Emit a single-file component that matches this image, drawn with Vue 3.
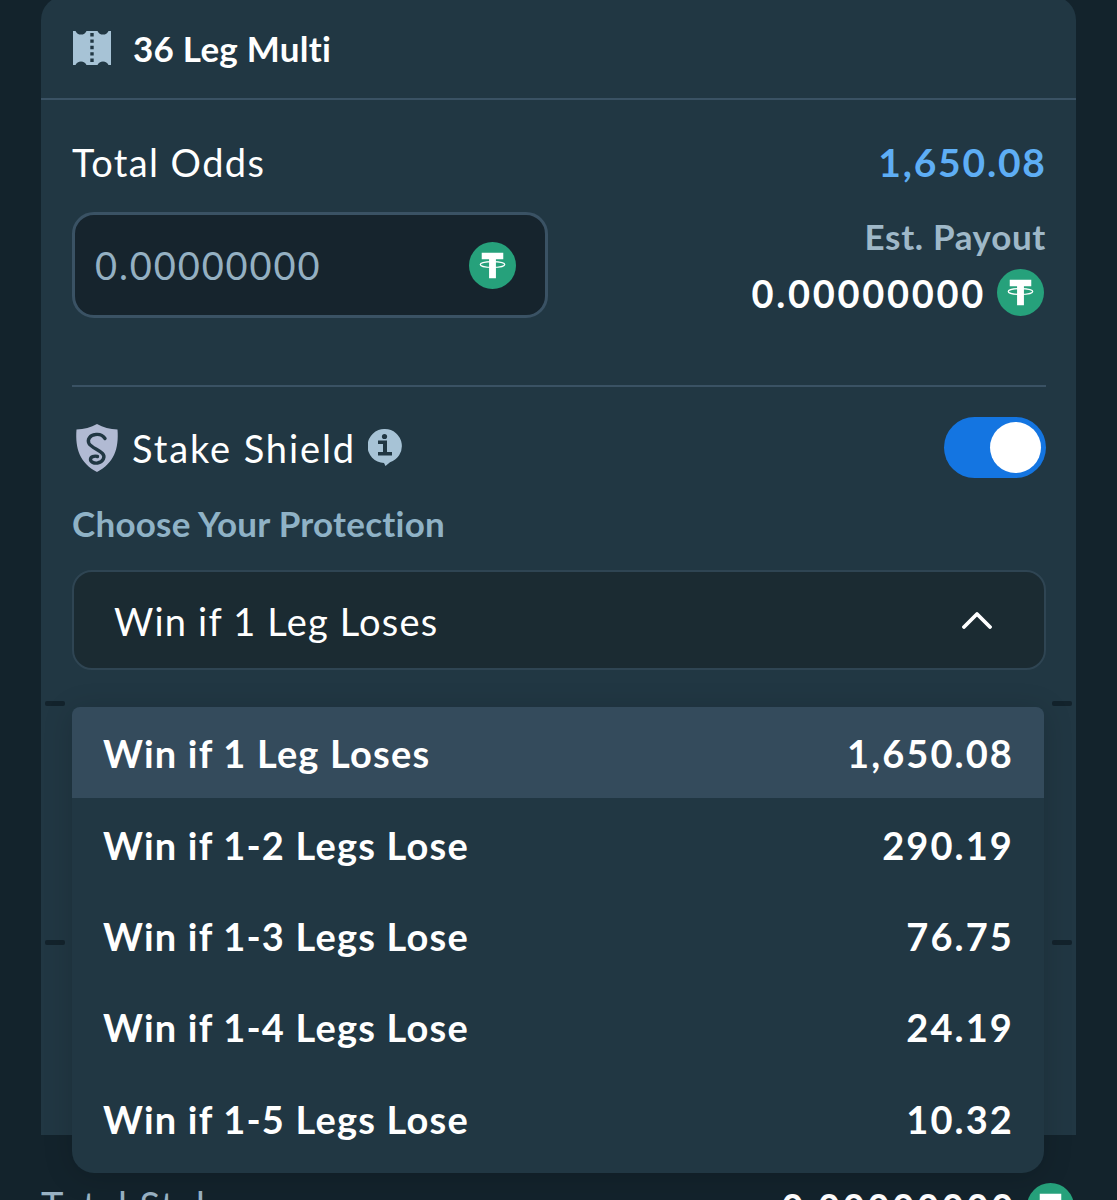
<script setup>
const options = [
  { label: 'Win if 1 Leg Loses', odds: '1,650.08', active: true },
  { label: 'Win if 1-2 Legs Lose', odds: '290.19' },
  { label: 'Win if 1-3 Legs Lose', odds: '76.75' },
  { label: 'Win if 1-4 Legs Lose', odds: '24.19' },
  { label: 'Win if 1-5 Legs Lose', odds: '10.32' },
]
</script>

<template>
  <div class="page">
    <svg width="0" height="0" class="defs">
      <symbol id="usdt" viewBox="0 0 48 48">
        <circle cx="24" cy="24" r="24" fill="#26a17b" />
        <path d="M13 11h22v6.500h-7.500V37h-7V17.500H13z" fill="#fff" />
        <ellipse cx="24" cy="23" rx="12.500" ry="3" fill="none" stroke="#fff" stroke-width="1.300" />
      </symbol>
    </svg>

    <section class="card">
      <header class="card-head">
        <svg class="ticket" viewBox="0 0 38 34">
          <path d="M0 0h2.500a6 6 0 0 0 11 0h11a6 6 0 0 0 11 0H38v34h-2.500a6 6 0 0 0-11 0h-11a6 6 0 0 0-11 0H0z" fill="#a7c3d6" />
          <path d="M19 2v30" stroke="#213743" stroke-width="3.400" stroke-dasharray="3.400 3" />
        </svg>
        <span>36 Leg Multi</span>
      </header>

      <div class="card-body">
        <div class="odds-row">
          <span class="odds-label">Total Odds</span>
          <span class="odds-value">1,650.08</span>
        </div>

        <div class="stake-row">
          <div class="stake-input">
            <span>0.00000000</span>
            <svg class="coin"><use href="#usdt" /></svg>
          </div>
          <div class="payout">
            <span class="payout-label">Est. Payout</span>
            <div class="payout-value">
              <span>0.00000000</span>
              <svg class="coin"><use href="#usdt" /></svg>
            </div>
          </div>
        </div>

        <div class="divider"></div>

        <div class="shield-row">
          <div class="shield-title">
            <svg class="shield" viewBox="0 0 44 48">
              <path d="M22 0c6 3.500 13 5 20.500 5.500C44 25 39 39 22 48 5 39 0 25 1.500 5.500 9 5 16 3.500 22 0z" fill="#b1bad3" />
              <path d="M30 14.500C28 11.500 24 10 20.500 10.500 15 11 12 15.500 14 19.500c2.200 4 9.500 6 13.500 10 3 3 1 8.500-5 9.500-3.500.5-7-1-7-3.500 0-2.500 3.500-4 7-3" fill="none" stroke="#213743" stroke-width="3.400" stroke-linecap="round" />
            </svg>
            <span class="shield-text">Stake Shield</span>
            <svg class="info" viewBox="0 0 34 37">
              <path d="M17 0a17 17 0 0 1 5 33.200L17.500 37l-1.500-3A17 17 0 0 1 17 0z" fill="#a7c3d6" />
              <circle cx="16.500" cy="7.500" r="2.600" fill="#213743" />
              <path d="M10 11.500h9V23h5v3.500H10V23h5v-8h-5z" fill="#213743" />
            </svg>
          </div>
          <div class="toggle"><div class="knob"></div></div>
        </div>

        <div class="choose">Choose Your Protection</div>

        <div class="select">
          <span>Win if 1 Leg Loses</span>
          <svg class="chevron" viewBox="0 0 30 18">
            <path d="M2 16 15 3l13 13" fill="none" stroke="#fff" stroke-width="3.800" stroke-linecap="round" stroke-linejoin="round" />
          </svg>
        </div>
      </div>

      <div class="legs">
        <div class="leg-rule"><i></i><i></i></div>
        <div class="leg-rule"><i></i><i></i></div>
      </div>
    </section>

    <footer class="foot">
      <span class="foot-label">Total Stake</span>
      <div class="foot-value">
        <span>0.00000000</span>
        <svg class="coin"><use href="#usdt" /></svg>
      </div>
    </footer>

    <ul class="menu">
      <li v-for="opt in options" :key="opt.label" :class="{ active: opt.active }">
        <span class="opt-label">{{ opt.label }}</span>
        <span class="opt-odds">{{ opt.odds }}</span>
      </li>
    </ul>
  </div>
</template>

<style>
html, body {
  background: #13232c;
}
</style>

<style scoped>
.page {
  position: relative;
  width: 1117px;
  height: 1200px;
  overflow: hidden;
  background: #13232c;
  font-family: Lato, "Open Sans", sans-serif;
  font-size: 38px;
  color: #fff;
}

.defs {
  position: absolute;
}

.card {
  width: 1035px;
  height: 1139px;
  margin-top: -4px;
  margin-left: 41px;
  background: #213743;
  border-top-left-radius: 24px;
  border-top-right-radius: 24px;
  overflow: hidden;
}

.card-head {
  display: flex;
  align-items: center;
  gap: 22px;
  height: 100px;
  padding: 2px 0 0 32px;
  border-bottom: 2px solid #3a5264;
  font-size: 35px;
  font-weight: 700;
  letter-spacing: 0.25px;
}

.ticket {
  width: 38px;
  height: 34px;
}

.card-body {
  padding: 0 30px 0 31px;
}

.odds-row {
  display: flex;
  justify-content: space-between;
  align-items: center;
  height: 44px;
  margin-top: 40px;
}

.odds-label {
  letter-spacing: 1.4px;
}

.odds-value {
  margin-right: -0.800px;
  color: #5eaef5;
  font-size: 39px;
  font-weight: 700;
  letter-spacing: 1.800px;
}

.stake-row {
  display: flex;
  justify-content: space-between;
  margin-top: 28px;
}

.stake-input {
  display: flex;
  align-items: center;
  justify-content: space-between;
  box-sizing: border-box;
  width: 476px;
  height: 106px;
  padding: 0 29px 0 20px;
  background: #16242d;
  border: 3px solid #3a5264;
  border-radius: 22px;
  color: #94b0c2;
  letter-spacing: 1.900px;
}

.coin {
  display: block;
  width: 47px;
  height: 47px;
}

.payout {
  display: flex;
  flex-direction: column;
  align-items: flex-end;
  padding-top: 3px;
}

.payout-label {
  color: #9fb8c8;
  font-size: 35px;
  font-weight: 700;
  letter-spacing: 0.650px;
}

.payout-value {
  display: flex;
  align-items: center;
  gap: 11px;
  margin-top: 12px;
  margin-right: 2px;
  font-weight: 700;
  letter-spacing: 2.700px;
}

.divider {
  height: 2px;
  margin-top: 67px;
  background: #3a5264;
}

.shield-row {
  display: flex;
  align-items: center;
  justify-content: space-between;
  height: 61px;
  margin-top: 30px;
}

.shield-title {
  display: flex;
  align-items: center;
  padding-left: 3px;
}

.shield {
  width: 44px;
  height: 48px;
  margin-right: 13px;
}

.shield-text {
  letter-spacing: 1.900px;
}

.info {
  width: 34px;
  height: 37px;
  margin-left: 12px;
}

.toggle {
  box-sizing: border-box;
  display: flex;
  justify-content: flex-end;
  align-items: center;
  width: 102px;
  height: 61px;
  padding-right: 5px;
  background: #1475e1;
  border-radius: 31px;
}

.knob {
  width: 51px;
  height: 51px;
  background: #fff;
  border-radius: 50%;
}

.choose {
  margin-top: 25px;
  color: #8fb2c6;
  font-size: 35px;
  font-weight: 700;
  line-height: 40px;
  letter-spacing: 0.25px;
}

.select {
  display: flex;
  align-items: center;
  justify-content: space-between;
  box-sizing: border-box;
  height: 100px;
  margin-top: 27px;
  padding: 2px 52px 0 40px;
  background: #1b2b32;
  border: 2px solid #2f4553;
  border-radius: 20px;
  letter-spacing: 1.200px;
}

.chevron {
  width: 30px;
  height: 18px;
  margin-top: -2px;
}

.legs {
  margin: 31px 4px 0;
}

.leg-rule {
  display: flex;
  justify-content: space-between;
  height: 239px;
}

.leg-rule i {
  width: 20px;
  height: 5px;
  background: #13232c;
  border-radius: 2px;
}

.foot {
  display: flex;
  justify-content: space-between;
  align-items: flex-start;
  padding: 48px 43px 0 41px;
}

.foot-label {
  margin-top: 2px;
  color: #9ab3c4;
  line-height: 40px;
  letter-spacing: 1.4px;
}

.foot-value {
  display: flex;
  align-items: center;
  gap: 11px;
  font-weight: 700;
  letter-spacing: 2.700px;
}

.menu {
  position: absolute;
  left: 72px;
  top: 707px;
  width: 972px;
  margin: 0;
  padding: 0 0 9px;
  list-style: none;
  background: #213743;
  border-radius: 8px 8px 22px 22px;
  box-shadow: 0 4px 30px rgba(0, 0, 0, 0.16);
  overflow: hidden;
  font-weight: 700;
}

.menu li {
  display: flex;
  align-items: center;
  justify-content: space-between;
  box-sizing: border-box;
  height: 91.400px;
  padding: 1px 32px 0 31px;
}

.menu li.active {
  background: #344b5c;
}

.opt-label {
  letter-spacing: 1.200px;
}

.opt-odds {
  margin-right: -2px;
  letter-spacing: 2.100px;
}
</style>
